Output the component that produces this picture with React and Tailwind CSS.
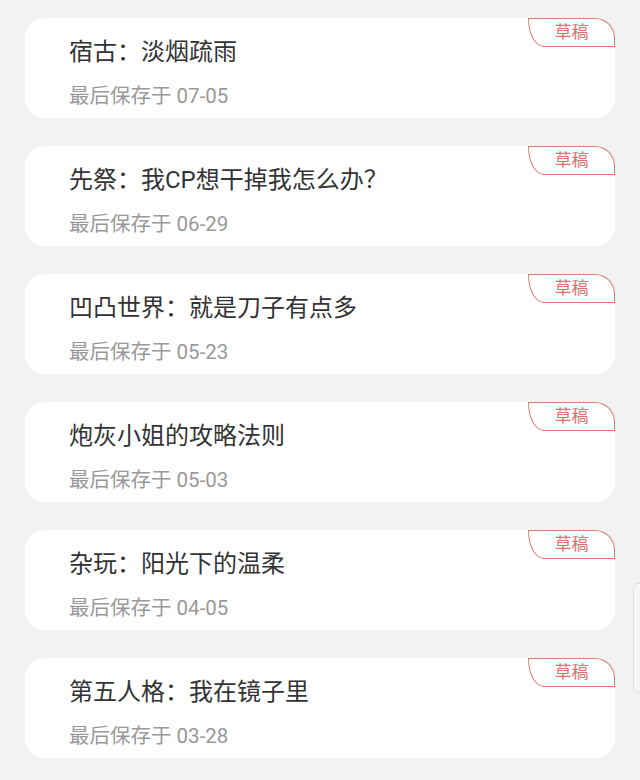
const drafts = [
  { title: "宿古：淡烟疏雨", date: "07-05" },
  { title: "先祭：我CP想干掉我怎么办？", date: "06-29" },
  { title: "凹凸世界：就是刀子有点多", date: "05-23" },
  { title: "炮灰小姐的攻略法则", date: "05-03" },
  { title: "杂玩：阳光下的温柔", date: "04-05" },
  { title: "第五人格：我在镜子里", date: "03-28" },
];

function DraftCard({ title, date }) {
  return (
    <div className="relative h-[100px] rounded-[20px] bg-white pl-[44px] pt-[18px]">
      <div className="absolute right-0 top-0 flex h-[29px] w-[87px] items-center justify-center rounded-tr-[20px] rounded-bl-[16px_28px] border-[1.5px] border-[#e07a77] text-[17px] leading-none text-[#d9736f]">
        草稿
      </div>
      <p className="text-[24px] leading-[32px] text-[#333333]">{title}</p>
      <p className="mt-[14px] text-[20.5px] leading-[28px] text-[#999999]">
        最后保存于 {date}
      </p>
    </div>
  );
}

export default function App() {
  return (
    <div
      className="relative min-h-[780px] overflow-hidden bg-[#f2f2f2] px-[25px] pt-[18px]"
      style={{ fontFamily: 'Roboto, "Noto Sans CJK SC", sans-serif' }}
    >
      <div className="flex flex-col gap-[28px]">
        {drafts.map((d) => (
          <DraftCard key={d.date} title={d.title} date={d.date} />
        ))}
      </div>
      {/* scroll handle peeking in from the right */}
      <div className="absolute left-[633px] top-[583px] h-[110px] w-[20px] rounded-[6px] border border-[#dddddd] bg-[#f6f6f6]" />
    </div>
  );
}
